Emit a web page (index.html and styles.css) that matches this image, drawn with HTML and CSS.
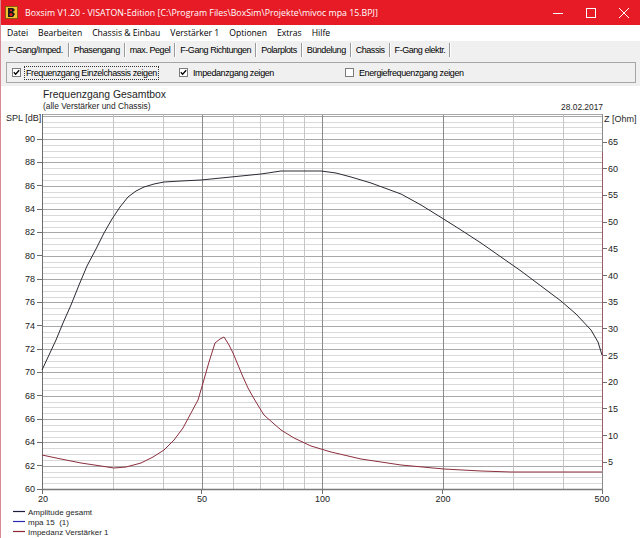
FILE: index.html
```html
<!DOCTYPE html>
<html lang="de">
<head>
<meta charset="utf-8">
<title>Boxsim</title>
<link rel="stylesheet" href="styles.css">
<script src="app.js" defer></script>
</head>
<body>
<div class="window">
  <header class="titlebar">
    <svg class="app-icon" viewBox="0 0 13 13">
      <rect x="0" y="0" width="13" height="13" fill="#f2c230"/>
      <rect x="0.5" y="0.5" width="12" height="12" fill="none" stroke="#8a5a10"/>
      <path d="M3 2 L8 2 L10 4 L8 6 L10 8 L8 11 L3 11 Z" fill="#1a1a1a"/>
      <circle cx="6" cy="8.5" r="1.6" fill="#e02020"/>
      <circle cx="6" cy="4.3" r="1.1" fill="#e02020"/>
    </svg>
    <span class="title">Boxsim V1.20 - VISATON-Edition [C:\Program Files\BoxSim\Projekte\mivoc mpa 15.BPJ]</span>
    <div class="controls">
      <span class="ctl"><svg width="10" height="10" viewBox="0 0 10 10"><path d="M0 5.5 H10" stroke="#fff" stroke-width="1"/></svg></span>
      <span class="ctl"><svg width="10" height="10" viewBox="0 0 10 10"><rect x="0.5" y="0.5" width="9" height="9" fill="none" stroke="#fff"/></svg></span>
      <span class="ctl"><svg width="10" height="10" viewBox="0 0 10 10"><path d="M0 0 L10 10 M10 0 L0 10" stroke="#fff" stroke-width="1"/></svg></span>
    </div>
  </header>

  <nav class="menubar">
    <span>Datei</span>
    <span>Bearbeiten</span>
    <span>Chassis &amp; Einbau</span>
    <span>Verstärker 1</span>
    <span>Optionen</span>
    <span>Extras</span>
    <span>Hilfe</span>
  </nav>

  <div class="tabs">
    <span class="tab active">F-Gang/Imped.</span>
    <span class="tab">Phasengang</span>
    <span class="tab">max. Pegel</span>
    <span class="tab">F-Gang Richtungen</span>
    <span class="tab">Polarplots</span>
    <span class="tab">Bündelung</span>
    <span class="tab">Chassis</span>
    <span class="tab">F-Gang elektr.</span>
  </div>

  <div class="options">
    <label class="opt"><span class="box checked"><svg viewBox="0 0 7 7"><path d="M0.8 3.2 L2.6 5.2 L6.2 1.2" fill="none" stroke="#000" stroke-width="1.3"/></svg></span><span class="lbl focus">Frequenzgang Einzelchassis zeigen</span></label>
    <label class="opt"><span class="box checked"><svg viewBox="0 0 7 7"><path d="M0.8 3.2 L2.6 5.2 L6.2 1.2" fill="none" stroke="#000" stroke-width="1.3"/></svg></span><span class="lbl">Impedanzgang zeigen</span></label>
    <label class="opt"><span class="box"></span><span class="lbl">Energiefrequenzgang zeigen</span></label>
  </div>

  <div class="chart">
    <svg class="plot" width="640" height="452" viewBox="0 86 640 452">
      <text class="c-title" x="42" y="98">Frequenzgang Gesamtbox</text>
      <text class="c-sub" x="42" y="108.5">(alle Verstärker und Chassis)</text>
      <text class="c-sub" x="602" y="109.5" text-anchor="end">28.02.2017</text>
      <text class="c-axis" x="5" y="121">SPL [dB]</text>
      <text class="c-axis" x="603" y="121.5">Z [Ohm]</text>

      <g id="grid"></g>

      <!-- frame and axes -->
      <path d="M41 114.5 H601" stroke="#a8a8a8" fill="none"/>
      <path d="M41.5 114 V490" stroke="#6e6e6e" fill="none"/>
      <path d="M41 489.5 H602" stroke="#7a7a7a" stroke-width="1.5" fill="none"/>
      <path d="M601.5 114 V490" stroke="#8a8a8a" fill="none"/>
      <path d="M601.5 152 V470" stroke="#9a5a66" fill="none"/>

      <!-- left ticks -->
      <path class="tick" d="M36 139.5H41 M36 162.5H41 M36 185.5H41 M36 209.5H41 M36 232.5H41 M36 255.5H41 M36 279.5H41 M36 302.5H41 M36 325.5H41 M36 349.5H41 M36 372.5H41 M36 395.5H41 M36 419.5H41 M36 442.5H41 M36 465.5H41 M36 489.5H41"/>
      <!-- right ticks -->
      <path class="tick" d="M602 142.5H606 M602 168.5H606 M602 195.5H606 M602 222.5H606 M602 248.5H606 M602 275.5H606 M602 302.5H606 M602 328.5H606 M602 355.5H606 M602 382.5H606 M602 408.5H606 M602 435.5H606 M602 462.5H606"/>
      <!-- bottom ticks -->
      <path class="tick" d="M41.5 490V494 M200.5 490V494 M321.5 490V494 M441.5 490V494 M601.5 490V494"/>

      <g class="ylab" text-anchor="end">
        <text x="34" y="139">90</text>
        <text x="34" y="162.3">88</text>
        <text x="34" y="185.7">86</text>
        <text x="34" y="209">84</text>
        <text x="34" y="232.3">82</text>
        <text x="34" y="255.7">80</text>
        <text x="34" y="279">78</text>
        <text x="34" y="302.3">76</text>
        <text x="34" y="325.7">74</text>
        <text x="34" y="349">72</text>
        <text x="34" y="372.3">70</text>
        <text x="34" y="395.7">68</text>
        <text x="34" y="419">66</text>
        <text x="34" y="442.3">64</text>
        <text x="34" y="465.7">62</text>
        <text x="34" y="489">60</text>
      </g>
      <g class="ylab">
        <text x="607" y="142">65</text>
        <text x="607" y="168.7">60</text>
        <text x="607" y="195.4">55</text>
        <text x="607" y="222.1">50</text>
        <text x="607" y="248.8">45</text>
        <text x="607" y="275.5">40</text>
        <text x="607" y="302.2">35</text>
        <text x="607" y="328.9">30</text>
        <text x="607" y="355.6">25</text>
        <text x="607" y="382.2">20</text>
        <text x="607" y="408.9">15</text>
        <text x="607" y="435.6">10</text>
        <text x="607" y="462.3">5</text>
      </g>
      <g class="ylab" text-anchor="middle">
        <text x="42" y="498.5">20</text>
        <text x="201" y="498.5">50</text>
        <text x="321.5" y="498.5">100</text>
        <text x="442" y="498.5">200</text>
        <text x="601" y="498.5">500</text>
      </g>

      <!-- curves -->
      <path class="curve amp" d="M41,370 L48,355 L55,340 L62,323 L70,305 L78,285 L86,266 L95,249 L103,233 L111,219 L119,207 L127,197 L135,191 L143,187 L153,184 L163,182 L180,181 L200,180 L230,177 L260,174 L280,171 L300,171 L320,171 L335,173 L350,177 L370,183 L400,194 L420,205 L441,218 L460,230 L480,243 L500,257 L520,271 L540,286 L560,301 L575,314 L590,330 L597,342 L601,355"/>
      <path class="curve imp" d="M41,455 L60,459 L80,463 L100,466 L113,468 L125,467 L140,463 L152,457 L163,450 L173,440 L182,428 L190,413 L197,400 L202,383 L208,362 L214,343 L219,339 L223,337 L228,345 L232,353 L237,365 L242,377 L247,388 L252,397 L258,407 L263,415 L272,423 L280,430 L293,438 L310,446 L330,452 L360,459 L400,465 L443,469 L480,471 L510,472 L601,472"/>

      <!-- legend -->
      <path d="M12 511.5H24" stroke="#1c1c3c" stroke-width="1.2"/>
      <path d="M12 521.5H24" stroke="#2a2ab8" stroke-width="1.2"/>
      <path d="M12 531.5H24" stroke="#8c2838" stroke-width="1.2"/>
      <text class="c-leg" x="27" y="514.5">Amplitude gesamt</text>
      <text class="c-leg" x="27" y="524.5">mpa 15  (1)</text>
      <text class="c-leg" x="27" y="534.5">Impedanz Verstärker 1</text>
    </svg>
  </div>
</div>
</body>
</html>
```

FILE: styles.css
```css
* { box-sizing: border-box; margin: 0; padding: 0; }

html, body {
  width: 640px;
  height: 538px;
  overflow: hidden;
}

body {
  background: #f0f0f0;
  font-family: "Liberation Sans", Arial, sans-serif;
  color: #000;
}

.window {
  height: 538px;
  display: flex;
  flex-direction: column;
  border-left: 1px solid #d88a92;
}

/* title bar */
.titlebar {
  height: 25px;
  flex: none;
  background: #e61b25;
  color: #fff;
  display: flex;
  align-items: center;
  font-family: "Open Sans", "Noto Sans", sans-serif;
  font-size: 8.8px;
}

.app-icon {
  width: 13px;
  height: 13px;
  flex: none;
  margin: 0 7px 0 4px;
}

.title {
  flex: 1;
  white-space: nowrap;
  overflow: hidden;
}

.controls {
  display: flex;
  height: 100%;
}

.ctl {
  width: 33px;
  height: 100%;
  display: flex;
  align-items: center;
  justify-content: center;
}

/* menu */
.menubar {
  height: 16px;
  flex: none;
  background: #fff;
  display: flex;
  align-items: center;
  gap: 10px;
  padding-left: 6px;
  font-family: "Open Sans", "Noto Sans", sans-serif;
  font-size: 8.6px;
  white-space: nowrap;
}

/* tabs */
.tabs {
  height: 17px;
  flex: none;
  display: flex;
  align-items: center;
  padding-left: 2px;
  font-size: 9px;
  letter-spacing: -0.45px;
  white-space: nowrap;
}

.tab {
  height: 14px;
  display: flex;
  align-items: center;
  padding: 0 4px 0 5px;
  border-right: 1px solid #9a9a9a;
  box-shadow: 1px 0 0 #fff;
}

.tab.active {
  padding-left: 5px;
  padding-right: 5px;
}

/* options panel */
.options {
  height: 21px;
  flex: none;
  margin: 4px 4px 0 5px;
  border: 1px solid #a6a6a6;
  background: #f0f0f0;
  display: grid;
  grid-template-columns: 167px 166px 1fr;
  align-items: center;
  padding-left: 5px;
  font-size: 9px;
  letter-spacing: -0.4px;
  white-space: nowrap;
}

.opt {
  display: flex;
  align-items: center;
}

.box {
  width: 9px;
  height: 9px;
  flex: none;
  border: 1px solid #7c7c7c;
  background: #fff;
  display: flex;
  align-items: center;
  justify-content: center;
}

.box svg {
  width: 7px;
  height: 7px;
}

.lbl {
  margin-left: 4px;
  padding: 1px 1px;
}

.lbl.focus {
  outline: 1px dotted #333;
}

/* chart */
.chart {
  flex: 1;
  margin-top: 3px;
  background: #fff;
  overflow: hidden;
}

.plot {
  display: block;
  font-family: "Liberation Sans", Arial, sans-serif;
}

.c-title { font-size: 10.4px; fill: #1e1e1e; }
.c-sub { font-size: 8.4px; fill: #1e1e1e; }
.c-axis { font-size: 9px; fill: #1e1e1e; }
.c-leg { font-size: 8px; fill: #1e1e1e; white-space: pre; }

.ylab text {
  font-size: 9px;
  fill: #222;
  dominant-baseline: central;
}

.tick {
  stroke: #6e6e6e;
  fill: none;
}

.curve {
  fill: none;
  stroke-width: 1;
  stroke-linejoin: round;
}

.curve.amp { stroke: #2a2a34; }
.curve.imp { stroke: #8c2e3e; }
```

FILE: app.js
```js
(function () {
  var NS = "http://www.w3.org/2000/svg";
  var grid = document.getElementById("grid");

  function line(x1, y1, x2, y2, color) {
    var l = document.createElementNS(NS, "line");
    l.setAttribute("x1", x1);
    l.setAttribute("y1", y1);
    l.setAttribute("x2", x2);
    l.setAttribute("y2", y2);
    l.setAttribute("stroke", color);
    grid.appendChild(l);
  }

  // horizontal lines every 0.5 dB (major every 2 dB)
  for (var k = 1; k <= 64; k++) {
    var y = Math.round(489 - k * 5.8333) + 0.5;
    if (y < 115) continue;
    line(42, y, 601, y, k % 4 === 0 ? "#a8a8a8" : "#d9d9d9");
  }

  // vertical lines (log frequency scale 20..500 Hz)
  var freqs = [30, 40, 50, 60, 70, 80, 90, 100, 200, 300, 400];
  freqs.forEach(function (f) {
    var x = Math.round(41.5 + 400.2 * Math.log10(f / 20)) + 0.5;
    var major = f === 50 || f === 100 || f === 200;
    line(x, 115, x, 489, major ? "#8a8a8a" : "#c6c6c6");
  });
})();
```
